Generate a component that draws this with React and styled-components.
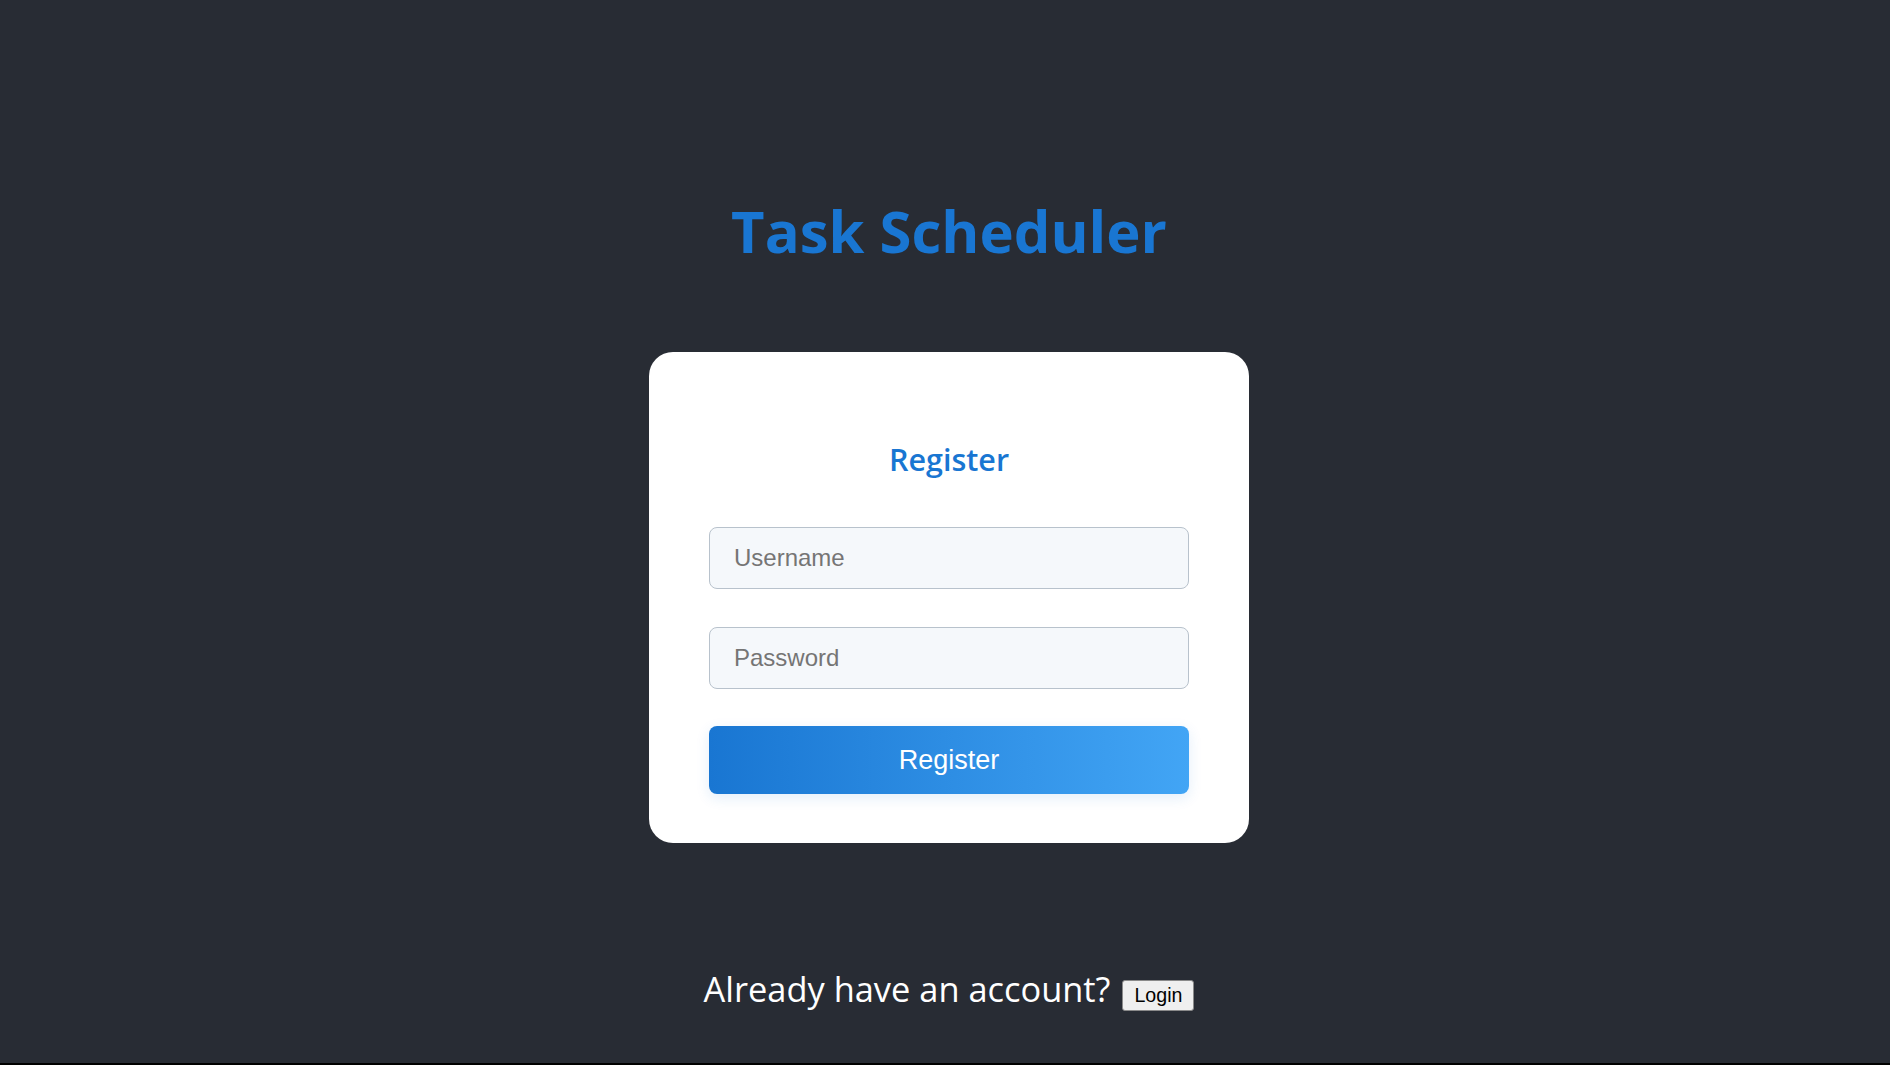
import React from "react";
import styled, { createGlobalStyle } from "styled-components";

const Global = createGlobalStyle`
  html { background: #000; }
  body { margin: 0; background: #282c34; }
  * { box-sizing: border-box; }
`;

const Page = styled.div`
  min-height: 1063px;
  background: #282c34;
  display: flex;
  flex-direction: column;
  align-items: center;
  padding: 195px 0 0 8px;
  font-family: "Open Sans", "Noto Sans", sans-serif;
`;

const Title = styled.h1`
  margin: 0;
  font-size: 58px;
  line-height: 72px;
  font-weight: 700;
  color: #1976d2;
`;

const Card = styled.div`
  margin-top: 85px;
  width: 600px;
  background: #fff;
  border-radius: 24px;
  padding: 87px 60px 49px;
  display: flex;
  flex-direction: column;
`;

const Heading = styled.h2`
  margin: 0 0 48px;
  text-align: center;
  font-size: 30.5px;
  line-height: 40px;
  font-weight: 600;
  color: #1976d2;
`;

const Field = styled.input`
  height: 62px;
  width: 100%;
  margin-bottom: ${(p) => p.$gap}px;
  padding: 0 24px;
  border: 1px solid #b8c2cc;
  border-radius: 8px;
  background: #f5f8fb;
  font-family: "Liberation Sans", Arial, sans-serif;
  font-size: 24px;
  color: #333;
  outline: none;
  &::placeholder { color: #757575; }
`;

const Submit = styled.button`
  height: 68px;
  width: 100%;
  border: none;
  border-radius: 8px;
  background: linear-gradient(90deg, #1976d2 0%, #42a5f5 100%);
  box-shadow: 0 4px 14px rgba(25, 118, 210, 0.12);
  color: #fff;
  font-family: "Liberation Sans", Arial, sans-serif;
  font-size: 27px;
  cursor: pointer;
`;

const Footer = styled.div`
  margin-top: 124px;
  display: flex;
  align-items: baseline;
  gap: 12px;
  color: #fff;
  font-size: 34.4px;
  line-height: 44px;
`;

const LoginButton = styled.button`
  font-family: "Liberation Sans", Arial, sans-serif;
  font-size: 19.6px;
  line-height: 23px;
  color: #000;
  background: #efefef;
  border: 1px solid #8a8a8a;
  border-radius: 3px;
  padding: 3px 11px;
  cursor: pointer;
`;

export default function App() {
  return (
    <>
      <Global />
      <Page>
        <Title>Task Scheduler</Title>
        <Card>
          <Heading>Register</Heading>
          <Field $gap={38} placeholder="Username" />
          <Field $gap={37} type="password" placeholder="Password" />
          <Submit>Register</Submit>
        </Card>
        <Footer>
          <span>Already have an account?</span>
          <LoginButton>Login</LoginButton>
        </Footer>
      </Page>
    </>
  );
}
